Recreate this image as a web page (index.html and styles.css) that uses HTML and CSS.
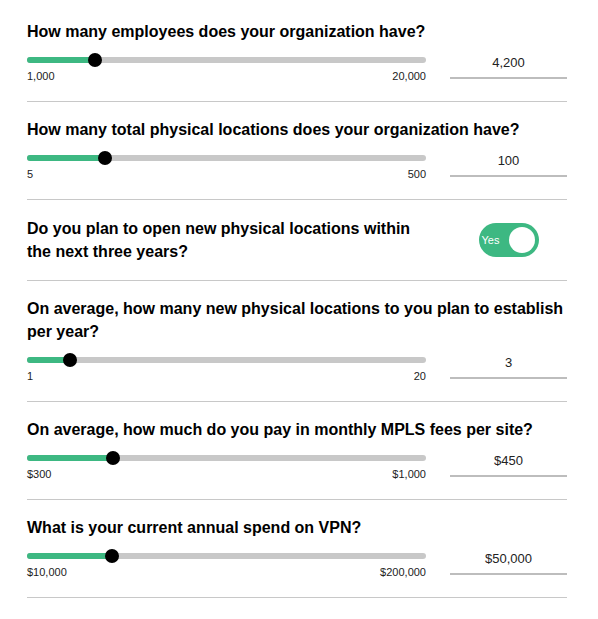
FILE: index.html
```html
<!DOCTYPE html>
<html lang="en">
<head>
<meta charset="utf-8">
<title>Calculator</title>
<link rel="stylesheet" href="styles.css">
</head>
<body>
<div class="form">
  <section class="q">
    <div class="q-title">How many employees does your organization have?</div>
    <div class="row">
      <div class="slider-col">
        <div class="track-wrap">
          <div class="track">
            <div class="fill" style="width:68px"></div>
            <div class="thumb" style="left:61px"></div>
          </div>
        </div>
        <div class="labels"><span>1,000</span><span>20,000</span></div>
      </div>
      <div class="value-col"><div class="value">4,200</div></div>
    </div>
  </section>

  <section class="q">
    <div class="q-title">How many total physical locations does your organization have?</div>
    <div class="row">
      <div class="slider-col">
        <div class="track-wrap">
          <div class="track">
            <div class="fill" style="width:78px"></div>
            <div class="thumb" style="left:71px"></div>
          </div>
        </div>
        <div class="labels"><span>5</span><span>500</span></div>
      </div>
      <div class="value-col"><div class="value">100</div></div>
    </div>
  </section>

  <section class="q q-toggle">
    <div class="q-title toggle-title">Do you plan to open new physical locations within the next three years?</div>
    <div class="value-col toggle-col">
      <div class="toggle"><span class="toggle-label">Yes</span><span class="knob"></span></div>
    </div>
  </section>

  <section class="q">
    <div class="q-title">On average, how many new physical locations to you plan to establish per year?</div>
    <div class="row">
      <div class="slider-col">
        <div class="track-wrap">
          <div class="track">
            <div class="fill" style="width:43px"></div>
            <div class="thumb" style="left:36px"></div>
          </div>
        </div>
        <div class="labels"><span>1</span><span>20</span></div>
      </div>
      <div class="value-col"><div class="value">3</div></div>
    </div>
  </section>

  <section class="q">
    <div class="q-title">On average, how much do you pay in monthly MPLS fees per site?</div>
    <div class="row">
      <div class="slider-col">
        <div class="track-wrap">
          <div class="track">
            <div class="fill" style="width:86px"></div>
            <div class="thumb" style="left:79px"></div>
          </div>
        </div>
        <div class="labels"><span>$300</span><span>$1,000</span></div>
      </div>
      <div class="value-col"><div class="value">$450</div></div>
    </div>
  </section>

  <section class="q">
    <div class="q-title">What is your current annual spend on VPN?</div>
    <div class="row">
      <div class="slider-col">
        <div class="track-wrap">
          <div class="track">
            <div class="fill" style="width:85px"></div>
            <div class="thumb" style="left:78px"></div>
          </div>
        </div>
        <div class="labels"><span>$10,000</span><span>$200,000</span></div>
      </div>
      <div class="value-col"><div class="value">$50,000</div></div>
    </div>
  </section>
</div>
</body>
</html>
```

FILE: styles.css
```css
html, body {
  margin: 0;
  padding: 0;
  background: #ffffff;
}

body {
  font-family: "Liberation Sans", Arial, sans-serif;
  color: #111111;
}

.form {
  width: 540px;
  padding: 4px 31px 0 27px;
}

.q {
  padding: 16px 0 18px;
  border-bottom: 1px solid #c8c8c8;
}

.q-title {
  font-size: 16px;
  font-weight: bold;
  line-height: 23px;
  color: #000000;
}

.row {
  display: flex;
  gap: 24px;
  margin-top: 10px;
}

.slider-col {
  width: 399px;
}

.track-wrap {
  height: 14px;
  display: flex;
  align-items: center;
}

.track {
  position: relative;
  flex: 1;
  height: 6px;
  border-radius: 3px;
  background: #c8c8c8;
}

.fill {
  position: absolute;
  left: 0;
  top: 0;
  bottom: 0;
  border-radius: 3px;
  background: #3db882;
}

.thumb {
  position: absolute;
  top: -4px;
  width: 14px;
  height: 14px;
  border-radius: 50%;
  background: #000000;
}

.labels {
  display: flex;
  justify-content: space-between;
  margin-top: 3px;
  font-size: 11px;
  line-height: 13px;
  color: #222222;
}

.value-col {
  width: 117px;
}

.value {
  padding: 2px 0 6px;
  font-size: 13px;
  line-height: 16px;
  text-align: center;
  color: #222222;
  border-bottom: 2px solid #bdbdbd;
}

.q-toggle {
  display: flex;
  align-items: center;
  gap: 24px;
  padding: 17px 0;
}

.toggle-title {
  width: 399px;
}

.toggle-col {
  display: flex;
  justify-content: center;
}

.toggle {
  width: 60px;
  height: 34px;
  box-sizing: border-box;
  padding: 0 4px 0 3px;
  border-radius: 17px;
  background: #3db882;
  display: flex;
  align-items: center;
  justify-content: space-between;
}

.toggle-label {
  font-size: 11px;
  color: #ffffff;
}

.knob {
  width: 26px;
  height: 26px;
  border-radius: 50%;
  background: #ffffff;
}
```
